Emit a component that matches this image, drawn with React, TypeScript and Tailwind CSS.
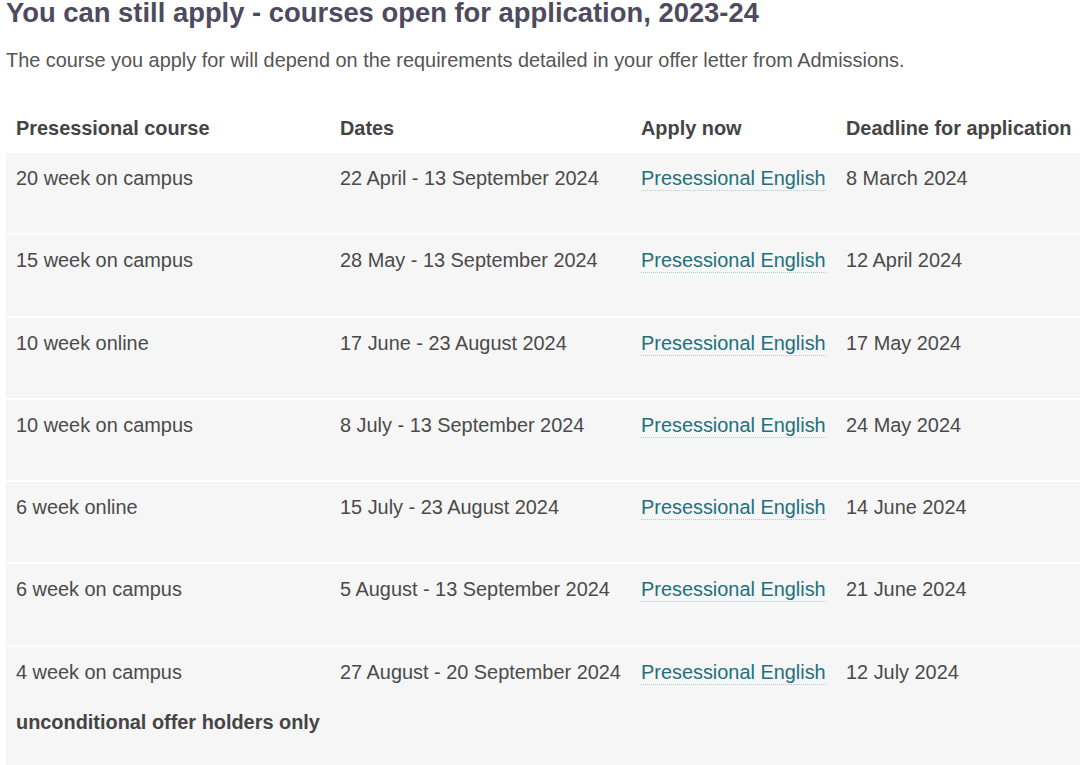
import React from "react";

const rows = [
  ["20 week on campus", "22 April - 13 September 2024", "8 March 2024"],
  ["15 week on campus", "28 May - 13 September 2024", "12 April 2024"],
  ["10 week online", "17 June - 23 August 2024", "17 May 2024"],
  ["10 week on campus", "8 July - 13 September 2024", "24 May 2024"],
  ["6 week online", "15 July - 23 August 2024", "14 June 2024"],
  ["6 week on campus", "5 August - 13 September 2024", "21 June 2024"],
  ["4 week on campus", "27 August - 20 September 2024", "12 July 2024"],
];

export default function App() {
  return (
    <div
      className="w-[1080px] h-[765px] overflow-hidden bg-white text-[#4a4a4a]"
      style={{ fontFamily: '"Liberation Sans", Arial, sans-serif' }}
    >
      <div className="pl-[6px]">
        <h1 className="text-[27.4px] font-bold leading-[30px] text-[#4e4a60] -mt-[2px] whitespace-nowrap">
          You can still apply - courses open for application, 2023-24
        </h1>
        <p className="mt-[17px] text-[19.9px] leading-[30px] text-[#555555] whitespace-nowrap">
          The course you apply for will depend on the requirements detailed in your offer letter from Admissions.
        </p>
        <div className="mt-[38px] w-[1100px]">
          <div className="grid grid-cols-[324px_301px_205px_270px] h-[40px] text-[19.9px] leading-[30px] font-bold text-[#444444]">
            <div className="pl-[10px]">Presessional course</div>
            <div className="pl-[10px]">Dates</div>
            <div className="pl-[10px]">Apply now</div>
            <div className="pl-[10px] whitespace-nowrap">Deadline for application</div>
          </div>
          <div className="flex flex-col gap-[2px]">
            {rows.map((r, i) => (
              <div
                key={i}
                className={`grid grid-cols-[324px_301px_205px_270px] bg-[#f6f6f6] text-[19.9px] leading-[30px] text-[#4a4a4a] pt-[10px] whitespace-nowrap ${
                  i === rows.length - 1 ? "h-[140px]" : "h-[80.3px]"
                }`}
              >
                <div className="pl-[10px]">
                  <div>{r[0]}</div>
                  {i === rows.length - 1 && (
                    <div className="mt-[20px] font-bold text-[#444444]">unconditional offer holders only</div>
                  )}
                </div>
                <div className="pl-[10px]">{r[1]}</div>
                <div className="pl-[10px]">
                  <span className="text-[#22707c] border-b border-dotted border-[#a9cdd2] pb-[1px]">Presessional English</span>
                </div>
                <div className="pl-[10px]">{r[2]}</div>
              </div>
            ))}
          </div>
        </div>
      </div>
    </div>
  );
}
